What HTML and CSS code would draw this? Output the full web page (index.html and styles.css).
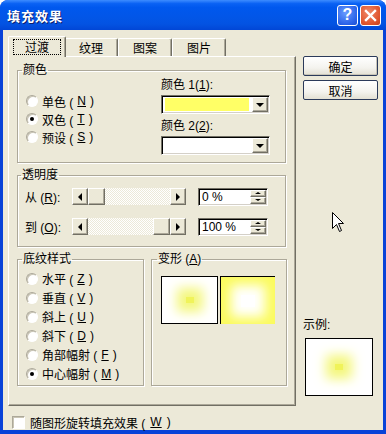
FILE: index.html
```html
<!DOCTYPE html>
<html>

<head>
  <meta charset="UTF-8" />
  <title>填充效果</title>
  <link rel="stylesheet" href="styles.css">
</head>

<body>
  <div class="window">
    <div class="titlebar">
      <span class="title">填充效果</span>
      <span class="tbtn help">?</span>
      <span class="tbtn close">
        <svg width="13" height="13" viewBox="0 0 13 13">
          <path d="M2 2 L11 11 M11 2 L2 11" stroke="#fff" stroke-width="2.4" stroke-linecap="square" />
        </svg>
      </span>
    </div>

    <div class="client">
      <div class="main">
        <div class="left">
          <div class="tabs">
            <span class="tab active"><span class="focus">过渡</span></span>
            <span class="tab">纹理</span>
            <span class="tab">图案</span>
            <span class="tab">图片</span>
          </div>
          <div class="panel">
            <fieldset class="group colors">
              <legend>颜色</legend>
              <div class="radios">
                <label class="radio"><i></i>单色 (<u>N</u>)</label>
                <label class="radio on"><i></i>双色 (<u>T</u>)</label>
                <label class="radio"><i></i>预设 (<u>S</u>)</label>
              </div>
              <div class="pickers">
                <div class="caption">颜色 1(<u>1</u>):</div>
                <div class="combo"><span class="swatch yellow"></span><b class="drop"><i class="down-tri"></i></b></div>
                <div class="caption second">颜色 2(<u>2</u>):</div>
                <div class="combo"><span class="swatch"></span><b class="drop"><i class="down-tri"></i></b></div>
              </div>
            </fieldset>

            <fieldset class="group transparency">
              <legend>透明度</legend>
              <div class="trow">
                <span class="tlabel">从 (<u>R</u>):</span>
                <div class="scroll">
                  <b class="sbtn"><i class="left-tri"></i></b>
                  <div class="track"><b class="thumb"></b></div>
                  <b class="sbtn"><i class="right-tri"></i></b>
                </div>
                <div class="spin">
                  <span class="val">0 %</span>
                  <div class="spinbtns"><b><i class="up-mini"></i></b><b><i class="down-mini"></i></b></div>
                </div>
              </div>
              <div class="trow">
                <span class="tlabel">到 (<u>O</u>):</span>
                <div class="scroll">
                  <b class="sbtn"><i class="left-tri"></i></b>
                  <div class="track end"><b class="thumb"></b></div>
                  <b class="sbtn"><i class="right-tri"></i></b>
                </div>
                <div class="spin">
                  <span class="val">100 %</span>
                  <div class="spinbtns"><b><i class="up-mini"></i></b><b><i class="down-mini"></i></b></div>
                </div>
              </div>
            </fieldset>

            <div class="bottom-groups">
              <fieldset class="group styles">
                <legend>底纹样式</legend>
                <label class="radio"><i></i>水平 (<u>Z</u>)</label>
                <label class="radio"><i></i>垂直 (<u>V</u>)</label>
                <label class="radio"><i></i>斜上 (<u>U</u>)</label>
                <label class="radio"><i></i>斜下 (<u>D</u>)</label>
                <label class="radio"><i></i>角部幅射 (<u>F</u>)</label>
                <label class="radio on"><i></i>中心幅射 (<u>M</u>)</label>
              </fieldset>
              <fieldset class="group variants">
                <legend>变形 (<u>A</u>)</legend>
                <div class="variant-list">
                  <div class="variant selected"><span class="glow yellow-glow"></span></div>
                  <div class="variant inverse"><span class="glow white-glow"></span></div>
                </div>
              </fieldset>
            </div>
          </div>
        </div>

        <div class="right">
          <button class="btn default">确定</button>
          <button class="btn">取消</button>
          <div class="sample">
            <div class="caption">示例:</div>
            <div class="preview"><span class="glow yellow-glow"></span></div>
          </div>
        </div>
      </div>

      <label class="check"><i></i>随图形旋转填充效果 (<u>W</u>)</label>
    </div>

    <svg class="cursor" width="13" height="21" viewBox="0 0 13 21">
      <path d="M0.5 0.5 L0.5 16.5 L4.5 12.5 L7.5 19.5 L9.5 18.5 L6.5 11.5 L11.5 11.5 Z" fill="#fff" stroke="#000" stroke-width="1" />
    </svg>
  </div>
</body>

</html>
```

FILE: styles.css
```css
* {
  box-sizing: border-box;
}

body {
  margin: 0;
  font-family: "Liberation Sans", "Noto Sans CJK SC", sans-serif;
  font-size: 12px;
  color: #000;
  background: #fff;
}

u {
  text-decoration: underline;
}

.window {
  position: relative;
  width: 386px;
  height: 434px;
  display: flex;
  flex-direction: column;
  background: #0842d8;
  border-radius: 8px 8px 0 0;
  overflow: hidden;
}

.titlebar {
  flex: none;
  height: 30px;
  display: flex;
  align-items: center;
  padding: 0 5px 0 7px;
  background: linear-gradient(to bottom, #3d8cff 0%, #0a62f4 12%, #0058ee 25%, #0256e8 55%, #0353e2 80%, #0146d6 100%);
}

.title {
  flex: 1;
  color: #fff;
  font-weight: bold;
  font-size: 13px;
  letter-spacing: 1px;
  text-shadow: 1px 1px 0 #0a1e6e;
}

.tbtn {
  width: 21px;
  height: 21px;
  margin-left: 2px;
  border: 1px solid #fff;
  border-radius: 3px;
  display: flex;
  align-items: center;
  justify-content: center;
  color: #fff;
  font: bold 16px "Liberation Sans", sans-serif;
}

.help {
  background: radial-gradient(circle at 40% 35%, #6a9cff, #2a62e8 70%, #1c4fd0);
}

.close {
  background: radial-gradient(circle at 40% 35%, #f08a6a, #e0552e 65%, #c6401c);
}

.client {
  flex: 1;
  margin: 0 3px 4px 3px;
  background: #ece9d8;
  padding: 6px 0 0 5px;
}

.main {
  display: flex;
  gap: 7px;
}

.left {
  width: 288px;
}

.tabs {
  height: 20px;
  display: flex;
  align-items: flex-end;
  padding-left: 2px;
}

.tab {
  position: relative;
  width: 54px;
  height: 18px;
  display: flex;
  align-items: center;
  justify-content: center;
  border-top: 1px solid #fff;
  border-left: 1px solid #fff;
  border-right: 1px solid #716f64;
  border-radius: 2px 2px 0 0;
  box-shadow: inset -1px 0 0 #aca899;
}

.tab.active {
  width: 58px;
  height: 21px;
  margin: 0 -2px -1px;
  z-index: 1;
  background: #ece9d8;
  padding-bottom: 1px;
}

.focus {
  width: 48px;
  height: 16px;
  display: flex;
  align-items: center;
  justify-content: center;
  border: 1px dotted #000;
}

.panel {
  height: 350px;
  border: 1px solid;
  border-color: #fff #716f64 #716f64 #fff;
  box-shadow: inset -1px -1px 0 #aca899;
  padding: 6px 0 0 8px;
}

.group {
  margin: 0;
  padding: 0 8px;
  border: 1px solid #aca899;
  box-shadow: inset 1px 1px 0 #fff, 1px 1px 0 #fff;
  min-width: 0;
}

.group legend {
  padding: 0 1px;
  margin-left: -4px;
  line-height: 14px;
}

.colors {
  width: 269px;
  height: 100px;
  display: grid;
  grid-template-columns: 135px 110px;
}

.radios {
  padding-top: 15px;
}

.radio {
  display: flex;
  align-items: center;
  gap: 4px;
  height: 18px;
  white-space: nowrap;
}

.radio i,
.check i {
  position: relative;
  flex: none;
  width: 12px;
  height: 12px;
  border-radius: 50%;
  background: #fff;
  border: 1px solid;
  border-color: #aca899 #fff #fff #aca899;
  box-shadow: inset 1px 1px 0 #c9c5b5;
}

.radio.on i::after {
  content: "";
  position: absolute;
  left: 3px;
  top: 3px;
  width: 4px;
  height: 4px;
  border-radius: 50%;
  background: #000;
}

.caption {
  line-height: 14px;
  margin-top: 1px;
  white-space: nowrap;
}

.caption.second {
  margin-top: 5px;
}

.combo {
  width: 109px;
  height: 19px;
  margin-top: 3px;
  display: flex;
  background: #fff;
  border: 1px solid;
  border-color: #716f64 #fff #fff #716f64;
  box-shadow: inset 1px 1px 0 #000, inset -1px -1px 0 #d4d0c8;
  padding: 2px 2px 2px 3px;
}

.swatch {
  flex: 1;
  margin-right: 3px;
  background: #fff;
}

.swatch.yellow {
  background: #ffff66;
}

.drop,
.sbtn,
.spinbtns b {
  display: flex;
  align-items: center;
  justify-content: center;
  background: #ece9d8;
  border: 1px solid;
  border-color: #fff #716f64 #716f64 #fff;
  box-shadow: inset -1px -1px 0 #aca899;
}

.drop {
  width: 16px;
  margin: -1px -1px -1px 0;
}

.down-tri {
  border: 4px solid transparent;
  border-top: 4px solid #000;
  border-bottom: 0;
  margin-top: 1px;
}

.transparency {
  width: 269px;
  height: 79px;
  margin-top: 5px;
  padding: 0 7px;
}

.trow {
  display: flex;
  align-items: center;
  height: 17px;
  margin-top: 6px;
}

.trow + .trow {
  margin-top: 13px;
}

.tlabel {
  width: 47px;
  white-space: nowrap;
}

.scroll {
  width: 114px;
  height: 17px;
  display: flex;
}

.sbtn {
  width: 16px;
  flex: none;
}

.left-tri {
  border: 4px solid transparent;
  border-right: 4px solid #000;
  border-left: 0;
}

.right-tri {
  border: 4px solid transparent;
  border-left: 4px solid #000;
  border-right: 0;
}

.track {
  flex: 1;
  display: flex;
  background: repeating-conic-gradient(#fff 0 25%, #ece9d8 0 50%) 0 0 / 2px 2px;
}

.track.end {
  justify-content: flex-end;
}

.thumb {
  width: 17px;
  background: #ece9d8;
  border: 1px solid;
  border-color: #fff #716f64 #716f64 #fff;
  box-shadow: inset -1px -1px 0 #aca899;
}

.spin {
  width: 70px;
  height: 18px;
  margin-left: 12px;
  display: flex;
  background: #fff;
  border: 1px solid;
  border-color: #716f64 #fff #fff #716f64;
  box-shadow: inset 1px 1px 0 #000, inset -1px -1px 0 #d4d0c8;
  padding: 1px 1px 1px 3px;
}

.val {
  flex: 1;
  line-height: 15px;
}

.spinbtns {
  width: 16px;
  display: flex;
  flex-direction: column;
}

.spinbtns b {
  flex: 1;
}

.up-mini {
  border: 3px solid transparent;
  border-bottom: 2px solid #000;
  border-top: 0;
}

.down-mini {
  border: 3px solid transparent;
  border-top: 2px solid #000;
  border-bottom: 0;
}

.bottom-groups {
  display: flex;
  gap: 7px;
  margin-top: 5px;
}

.styles {
  width: 127px;
  height: 134px;
  padding-top: 2px;
}

.styles .radio {
  height: 19px;
}

.styles .radio:first-of-type {
  margin-top: 1px;
}

.variants {
  width: 136px;
  height: 134px;
  padding: 0 9px;
}

.variant-list {
  display: flex;
  gap: 2px;
  margin-top: 10px;
}

.variant {
  width: 57px;
  height: 48px;
  display: flex;
  align-items: center;
  justify-content: center;
  overflow: hidden;
}

.variant.selected {
  background: #fff;
  border: 1px solid #000;
}

.variant.inverse {
  width: 55px;
  background: #fbfb5e;
  border-top: 1px solid #000;
  border-left: 1px solid #000;
}

.glow {
  width: 8px;
  height: 6px;
}

.yellow-glow {
  background: #f0f35a;
  box-shadow: 0 0 12px 9px #f4f77c;
}

.white-glow {
  width: 14px;
  height: 12px;
  background: #fff;
  box-shadow: 0 0 12px 10px #fff;
}

.right {
  width: 75px;
  padding-top: 20px;
  display: flex;
  flex-direction: column;
}

.btn {
  height: 20px;
  margin-bottom: 4px;
  font: 12px "Noto Sans CJK SC", sans-serif;
  color: #000;
  background: linear-gradient(#fff, #f4f3ee 60%, #e3e0d3);
  border: 1px solid #2b3a5a;
  border-radius: 2px;
  padding: 0;
}

.btn.default {
  box-shadow: inset -1px -1px 0 #c8c5b8;
}

.sample {
  margin-top: 214px;
  padding-left: 2px;
}

.sample .caption {
  margin: 0 0 6px -2px;
}

.preview {
  width: 68px;
  height: 58px;
  display: flex;
  align-items: center;
  justify-content: center;
  background: #fff;
  border: 1px solid #000;
  overflow: hidden;
}

.check {
  display: flex;
  align-items: center;
  gap: 5px;
  margin: 9px 0 0 4px;
  height: 14px;
}

.check i {
  border-radius: 0;
  width: 13px;
  height: 13px;
}

.cursor {
  position: absolute;
  left: 332px;
  top: 212px;
}
```
